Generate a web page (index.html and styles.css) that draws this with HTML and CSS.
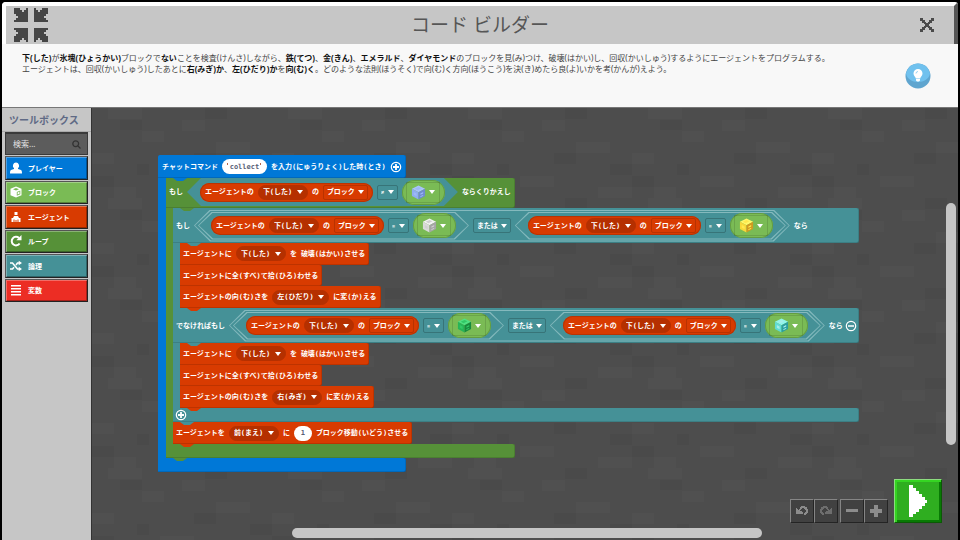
FILE: index.html
```html
<!DOCTYPE html>
<html lang="ja">
<head>
<meta charset="utf-8">
<title>コード ビルダー</title>
<link rel="stylesheet" href="styles.css">
</head>
<body>
<svg class="defs" aria-hidden="true">
  <symbol id="cube" viewBox="0 0 16 16">
    <path class="c-top" d="M8 0.5 15 4 8 7.7 1 4z"/>
    <path class="c-left" d="M1 4 8 7.7V15.5L1 11.8z"/>
    <path class="c-right" d="M15 4 8 7.7V15.5L15 11.8z"/>
    <path class="c-mark" d="M4 4 8 2l3 1.500-4 2zM3 7.500l3 1.500v3l-3-1.500zM10 9l3-1.500v1.500l-3 1.500zM10 12l3-1.500v1l-3 1.500z"/>
  </symbol>
  <symbol id="plus" viewBox="0 0 12 12">
    <circle cx="6" cy="6" r="4.700" fill="none" stroke="#fff" stroke-width="1.200"/>
    <path d="M3 6h6M6 3v6" stroke="#fff" stroke-width="1.800"/>
  </symbol>
  <symbol id="minus" viewBox="0 0 12 12">
    <circle cx="6" cy="6" r="4.700" fill="none" stroke="#fff" stroke-width="1.200"/>
    <path d="M3 6h6" stroke="#fff" stroke-width="1.500"/>
  </symbol>
  <symbol id="arrow" viewBox="0 0 7 7">
    <path d="M0 0h3v1h1v1h1V1h1V0h1v7H0V6h1V5h1V4H1V3H0z"/>
  </symbol>
</svg>

<div class="app">
  <header class="titlebar">
    <button class="icon-button" aria-label="縮小">
      <svg width="34" height="34" viewBox="0 0 17 17" fill="#454545" shape-rendering="crispEdges">
        <use href="#arrow" width="7" height="7"/>
        <use href="#arrow" width="7" height="7" transform="translate(17 0) scale(-1 1)"/>
        <use href="#arrow" width="7" height="7" transform="translate(0 17) scale(1 -1)"/>
        <use href="#arrow" width="7" height="7" transform="translate(17 17) scale(-1 -1)"/>
      </svg>
    </button>
    <h1>コード ビルダー</h1>
    <button class="icon-button close" aria-label="閉じる">
      <svg width="14" height="14" viewBox="0 0 14 14" fill="#4a4a4a">
        <path d="M0 0h3v2h2v2h1v1h2V4h1V2h2V0h3v3h-2v2h-2v1H9v2h1v1h2v2h2v3h-3v-2H9v-2H8V9H6v1H5v2H3v2H0v-3h2V9h2V8h1V6H4V5H2V3H0z"/>
      </svg>
    </button>
  </header>

  <section class="instructions">
    <p><b>下(した)</b>が<b>氷塊(ひょうかい)</b>ブロックで<b>ない</b>ことを検査(けんさ)しながら、<b>鉄(てつ)</b>、<b>金(きん)</b>、<b>エメラルド</b>、<b>ダイヤモンド</b>のブロックを見(み)つけ、破壊(はかい)し、回収(かいしゅう)するようにエージェントをプログラムする。<br>エージェントは、回収(かいしゅう)したあとに<b>右(みぎ)か</b>、<b>左(ひだり)か</b>を<b>向(む)く</b>。どのような法則(ほうそく)で向(む)く方向(ほうこう)を決(き)めたら良(よ)いかを考(かんが)えよう。</p>
    <button class="hint" aria-label="ヒント">
      <svg width="26" height="26" viewBox="0 0 26 26">
        <circle cx="13" cy="13" r="12.500" fill="#5fa5cf"/>
        <path d="M1 10.500a12.200 12.200 0 0 1 24 0C24 16 19 19 13 19S2 16 1 10.500z" fill="#70c1ee"/>
        <path d="M13 6a4.500 4.500 0 0 0-4.500 4.500c0 2.500 2 3 2.300 5h4.400c.3-2 2.300-2.500 2.300-5A4.500 4.500 0 0 0 13 6zM11 16h4v1.500l-1 1h-2l-1-1z" fill="#fff"/>
        <path d="M11 10.500a2 2 0 0 1 2-2" fill="none" stroke="#9bd4f3"/>
      </svg>
    </button>
  </section>

  <main class="editor">
    <aside class="toolbox">
      <h2>ツールボックス</h2>
      <div class="search">
        <input type="search" placeholder="検索..." aria-label="検索">
        <svg width="9" height="9" viewBox="0 0 9 9" fill="none" stroke="#333" stroke-width="1.300"><circle cx="3.700" cy="3.700" r="2.900"/><path d="M6 6l2.500 2.500"/></svg>
      </div>
      <nav class="categories">
        <button class="player"><svg width="12" height="12" viewBox="0 0 12 12" fill="#fff"><path d="M6 .5a3.200 3.300 0 0 1 2 5.800V7l3 1c.8.500 1 1.500 1 3.500H0c0-2 .2-3 1-3.500l3-1v-.7A3.200 3.300 0 0 1 6 .5z"/></svg>プレイヤー</button>
        <button class="blocks"><svg width="12" height="12" viewBox="0 0 12 12" fill="#fff"><path d="M6 .5l5.500 2.300v6.400L6 11.500.5 9.200V2.800z"/><path d="M3 3.300 6 2l3 1.300-3 1.200zM6.800 6v3.800l3.500-1.500V4.500z" fill="#7abb55"/><path d="M7.600 6.400l1.900-.8v2.200l-1.900.8z"/></svg>ブロック</button>
        <button class="agent"><svg width="12" height="12" viewBox="0 0 12 12" fill="#fff"><path d="M4.500 1h3v3h-3zM4 5h4l1 2h1.500v4H8.500V8.500h-1v2.500h-1V9h-1v2h-1V8.500h-1V11H1.500V7H3z"/></svg>エージェント</button>
        <button class="loops"><svg width="12" height="12" viewBox="0 0 12 12"><path d="M9.600 8.500A4.300 4.300 0 1 1 9 3" fill="none" stroke="#fff" stroke-width="2"/><path d="M11.500 0v5.200H6.300z" fill="#fff"/></svg>ループ</button>
        <button class="logic"><svg width="12" height="12" viewBox="0 0 12 12"><path d="M0 3h2.500l5 6H9M0 9h2.500l1.500-1.800M6 5l1.500-2H9" fill="none" stroke="#fff" stroke-width="1.600"/><path d="M8.700.7 12 3 8.700 5.300zM8.700 6.700 12 9l-3.300 2.300z" fill="#fff"/></svg>論理</button>
        <button class="vars"><svg width="12" height="12" viewBox="0 0 12 12" fill="#fff"><path d="M1 1h10v1.500H1zM1 4h10v1.500H1zM1 7h10v1.500H1zM1 10h10v1.500H1z"/></svg>変数</button>
      </nav>
    </aside>

    <section class="workspace" aria-label="ワークスペース">
      <svg class="texture" width="100%" height="100%" aria-hidden="true">
        <defs>
          <pattern id="stone" width="180" height="90" patternUnits="userSpaceOnUse">
            <rect width="180" height="90" fill="#4d4d4d"/>
            <path d="M16 0h34v11H16zM50 23h22v11H50zM90 12h23v11H90zM0 45h22v11H0zM124 34h34v11h-34zM68 68h34v11H68zM146 79h34v11h-34zM22 79h22v11H22z" fill="#505050"/>
            <path d="M28 12h22v10H28zM113 0h22v11h-22zM102 45h22v11h-22zM45 56h12v11H45zM158 56h22v11h-22zM0 68h22v11H0z" fill="#4a4a4a"/>
          </pattern>
        </defs>
        <rect width="100%" height="100%" fill="url(#stone)"/>
      </svg>

      <div class="script">
        <div class="c-block on-chat">
          <div class="head">
            <span>チャットコマンド</span>
            <label class="quoted"><input class="text-field" value="collect" aria-label="チャットコマンド"></label>
            <span>を入力(にゅうりょく)した時(とき)</span>
            <button class="round" aria-label="引数を追加"><svg width="12" height="12"><use href="#plus"/></svg></button>
          </div>
          <div class="body">
            <div class="c-block while">
              <div class="head">
                <span>もし</span>
                <div class="hex">
                  <div class="reporter"><span>エージェントの</span><label class="pick dark"><select aria-label="方向"><option>下(した)</option></select></label><span>の</span><label class="pick"><select aria-label="種類"><option>ブロック</option></select></label></div>
                  <label class="pick op"><select aria-label="比較"><option>≠</option></select></label>
                  <button class="item ice" aria-label="氷塊"><span><svg width="15" height="15"><use href="#cube"/></svg></span></button>
                </div>
                <span>ならくりかえし</span>
              </div>
              <div class="body">
                <div class="c-block if">
                  <div class="head">
                    <span>もし</span>
                    <div class="hex outlined outer">
                      <div class="hex outlined">
                        <div class="reporter"><span>エージェントの</span><label class="pick dark"><select aria-label="方向"><option>下(した)</option></select></label><span>の</span><label class="pick"><select aria-label="種類"><option>ブロック</option></select></label></div>
                        <label class="pick op"><select aria-label="比較"><option>=</option></select></label>
                        <button class="item iron" aria-label="鉄ブロック"><span><svg width="15" height="15"><use href="#cube"/></svg></span></button>
                      </div>
                      <label class="pick or"><select aria-label="論理演算"><option>または</option></select></label>
                      <div class="hex outlined">
                        <div class="reporter"><span>エージェントの</span><label class="pick dark"><select aria-label="方向"><option>下(した)</option></select></label><span>の</span><label class="pick"><select aria-label="種類"><option>ブロック</option></select></label></div>
                        <label class="pick op"><select aria-label="比較"><option>=</option></select></label>
                        <button class="item gold" aria-label="金ブロック"><span><svg width="15" height="15"><use href="#cube"/></svg></span></button>
                      </div>
                    </div>
                    <span>なら</span>
                  </div>
                  <div class="body trio">
                    <div class="statement"><span>エージェントに</span><label class="pick dark"><select aria-label="方向"><option>下(した)</option></select></label><span>を</span><span>破壊(はかい)させる</span></div>
                    <div class="statement"><span>エージェントに全(すべ)て拾(ひろ)わせる</span></div>
                    <div class="statement"><span>エージェントの向(む)きを</span><label class="pick dark"><select aria-label="向き"><option>左(ひだり)</option></select></label><span>に変(か)える</span></div>
                  </div>
                  <div class="head">
                    <span>でなければもし</span>
                    <div class="hex outlined outer">
                      <div class="hex outlined">
                        <div class="reporter"><span>エージェントの</span><label class="pick dark"><select aria-label="方向"><option>下(した)</option></select></label><span>の</span><label class="pick"><select aria-label="種類"><option>ブロック</option></select></label></div>
                        <label class="pick op"><select aria-label="比較"><option>=</option></select></label>
                        <button class="item emerald" aria-label="エメラルドブロック"><span><svg width="15" height="15"><use href="#cube"/></svg></span></button>
                      </div>
                      <label class="pick or"><select aria-label="論理演算"><option>または</option></select></label>
                      <div class="hex outlined">
                        <div class="reporter"><span>エージェントの</span><label class="pick dark"><select aria-label="方向"><option>下(した)</option></select></label><span>の</span><label class="pick"><select aria-label="種類"><option>ブロック</option></select></label></div>
                        <label class="pick op"><select aria-label="比較"><option>=</option></select></label>
                        <button class="item diamond" aria-label="ダイヤモンドブロック"><span><svg width="15" height="15"><use href="#cube"/></svg></span></button>
                      </div>
                    </div>
                    <span>なら</span>
                    <button class="round" aria-label="条件を削除"><svg width="12" height="12"><use href="#minus"/></svg></button>
                  </div>
                  <div class="body trio">
                    <div class="statement"><span>エージェントに</span><label class="pick dark"><select aria-label="方向"><option>下(した)</option></select></label><span>を</span><span>破壊(はかい)させる</span></div>
                    <div class="statement"><span>エージェントに全(すべ)て拾(ひろ)わせる</span></div>
                    <div class="statement"><span>エージェントの向(む)きを</span><label class="pick dark"><select aria-label="向き"><option>右(みぎ)</option></select></label><span>に変(か)える</span></div>
                  </div>
                  <div class="foot"><button class="round" aria-label="条件を追加"><svg width="12" height="12"><use href="#plus"/></svg></button></div>
                </div>
                <div class="statement"><span>エージェントを</span><label class="pick dark"><select aria-label="方向"><option>前(まえ)</option></select></label><span>に</span><input class="text-field number" value="1" aria-label="ブロック数"><span>ブロック移動(いどう)させる</span></div>
              </div>
              <div class="foot"></div>
            </div>
          </div>
          <div class="foot"></div>
        </div>
      </div>

      <div class="scroll-v"></div>
      <div class="scroll-h"></div>

      <div class="controls">
        <div class="pair">
          <button aria-label="元に戻す"><svg width="12" height="10" viewBox="0 0 12 10" shape-rendering="crispEdges" fill="#8c8c8c"><path d="M5 0h4v1h2v2h1v4h-1v1h-1v1H8V7h1V6h1V4H9V3H8V2H6v1H5v1H4v1h2v1h1v2H0V2h1v1h1v1h1V3h1V1h1z"/></svg></button>
          <button aria-label="やり直す"><svg class="flip" width="12" height="10" viewBox="0 0 12 10" shape-rendering="crispEdges" fill="#6e6e6e"><path d="M5 0h4v1h2v2h1v4h-1v1h-1v1H8V7h1V6h1V4H9V3H8V2H6v1H5v1H4v1h2v1h1v2H0V2h1v1h1v1h1V3h1V1h1z"/></svg></button>
        </div>
        <div class="pair">
          <button aria-label="縮小表示"><svg width="12" height="12" fill="#8c8c8c"><path d="M0 4h12v3H0z"/></svg></button>
          <button aria-label="拡大表示"><svg width="12" height="12" fill="#8c8c8c"><path d="M4 0h4v4h4v4H8v4H4V8H0V4h4z"/></svg></button>
        </div>
        <button class="play" aria-label="実行"><svg width="18" height="32" viewBox="0 0 18 32" fill="#fff" shape-rendering="crispEdges"><path d="M0 0h4v3h3v3h3v3h3v3h3v3h2v3h-2v3h-3v3h-3v3H7v2H4v3H0z"/></svg></button>
      </div>
    </section>
  </main>
</div>
</body>
</html>
```
FILE: styles.css
```css
* { box-sizing: border-box; }

body {
  margin: 0;
  background: #000;
  font-family: "Noto Sans", "Noto Sans CJK JP", sans-serif;
  overflow: hidden;
}

button, input, select { font: inherit; color: inherit; margin: 0; }
button { border: 0; padding: 0; background: none; display: flex; align-items: center; }
svg { display: block; flex: none; }
.defs { position: absolute; width: 0; height: 0; }

.app {
  display: flex;
  flex-direction: column;
  height: 100vh;
  padding: 2px 2px 0;
}

/* Title bar */
.titlebar {
  display: grid;
  grid-template-columns: 1fr auto 1fr;
  align-items: center;
  height: 42px;
  padding: 0 8px;
  background: #c6c6c6;
  border-top: 4px solid #fff;
  border-left: 4px solid #fff;
  border-right: 4px solid #555;
  border-top-left-radius: 4px;
  border-top-right-radius: 3px;
}
.titlebar h1 { margin: 0; font-size: 19px; line-height: 28px; font-weight: 400; color: #565656; }
.close { justify-self: end; padding-right: 12px; }

/* Instructions */
.instructions {
  display: flex;
  justify-content: space-between;
  align-items: flex-start;
  height: 64px;
  padding: 8px 27px 0 20px;
  background: #f8f8f8;
  border-bottom: 1px solid #777;
}
.instructions p { margin: 0; font-size: 8px; line-height: 11px; color: #444; white-space: nowrap; }
.instructions b { color: #111; }
.hint { margin-top: 11px; }

/* Toolbox */
.editor { display: flex; flex: 1; min-height: 0; }
.toolbox {
  flex: none;
  width: 90px;
  background: #c6c6c6;
  border-right: 1px solid #333;
}
.toolbox h2 {
  margin: 0;
  padding-left: 7px;
  height: 24px;
  font-size: 10px;
  line-height: 24px;
  font-weight: 700;
  color: #5f6a85;
  border-bottom: 1px solid #aaa;
}
.search {
  display: flex;
  align-items: center;
  height: 23px;
  margin: 0 3px;
  padding: 0 6px 0 7px;
  background: #5c5c5c;
  border: 1px solid #3a3a3a;
  border-top-width: 2px;
}
.search input {
  flex: 1;
  min-width: 0;
  padding: 0;
  border: 0;
  outline: 0;
  background: none;
  font-size: 8px;
  line-height: 12px;
}
.search input::placeholder { color: #e4e4e4; opacity: 1; }
.categories {
  display: flex;
  flex-direction: column;
  height: 147px;
  margin: 1px 3px 0;
}
.categories button {
  flex: 1;
  gap: 6px;
  margin-bottom: 1px;
  padding-left: 4px;
  color: #fff;
  font: bold 7px "DejaVu Sans Mono", "Noto Sans CJK JP", monospace;
  border: 1px solid #222;
  border-top: 1px solid #555;
  border-left: 1px solid #555;
  box-shadow: inset 1px 1px rgba(255, 255, 255, .3), inset -1px -1px rgba(0, 0, 0, .3);
}
.player { background: #0078d7; }
.blocks { background: #7abb55; }
.agent { background: #d83b01; }
.loops { background: #569138; }
.logic { background: #459197; }
.vars { background: #ec2d24; }

/* Workspace */
.workspace { position: relative; flex: 1; min-width: 0; overflow: hidden; }
.texture { position: absolute; inset: 0; }
.script {
  position: absolute;
  left: 66px;
  top: 47px;
  color: #fff;
  font: bold 7px/10px "DejaVu Sans Mono", "Noto Sans CJK JP", monospace;
  white-space: nowrap;
}

.c-block {
  --arm: 7px;
  display: grid;
  justify-items: stretch;
  width: max-content;
}
.on-chat { --fill: #0078d7; --arm: 8px; }
.while { --fill: #569138; }
.if { --fill: #459197; }

.head, .foot, .statement {
  position: relative;
  display: flex;
  align-items: center;
  gap: 4px;
  padding: 0 4px;
  background: var(--fill);
  box-shadow: inset 0 -1px rgba(0, 0, 0, .12), inset -1px 0 rgba(0, 0, 0, .12);
  border-radius: 0 2px 2px 0;
}
.head, .statement { padding-left: 3px; }
.on-chat > .head { height: 23px; padding-left: 4px; border-radius: 2px 2px 2px 0; }
.while > .head { height: 30px; padding-bottom: 2px; }
.if > .head { height: 35px; }
.foot { height: 14px; }
.if .round { margin: 0 -2px; }

.head::after, .statement::after, .while > .foot::after, .if > .foot::after {
  content: "";
  position: absolute;
  left: 7px;
  bottom: -3px;
  width: 14px;
  height: 3px;
  background: var(--fill);
  clip-path: polygon(0 0, 100% 0, 10px 100%, 4px 100%);
  z-index: 1;
}
.head::after { left: calc(var(--arm) + 7px); }

.body {
  width: 0;
  border-left: var(--arm) solid var(--fill);
}
.trio { display: flex; flex-direction: column; height: 65px; }
.trio .statement { flex: 1; }
.statement {
  --fill: #d83b01;
  width: max-content;
  height: 22px;
}

.hex {
  --tip: 14px;
  display: flex;
  align-items: center;
  gap: 4px;
  height: 28px;
  padding: 0 13px;
  background: #459197;
  clip-path: polygon(0 50%, var(--tip) 0, calc(100% - var(--tip)) 0, 100% 50%, calc(100% - var(--tip)) 100%, var(--tip) 100%);
}
.hex.outlined { position: relative; background: #84b9bd; }
.hex.outlined::before {
  content: "";
  position: absolute;
  inset: 1px;
  background: #459197;
  clip-path: polygon(0 50%, var(--tip) 0, calc(100% - var(--tip)) 0, 100% 50%, calc(100% - var(--tip)) 100%, var(--tip) 100%);
}
.hex.outlined > * { position: relative; }
.hex.outer { --tip: 16px; height: 32px; padding: 0 4px; }
.hex.outer > .hex { --tip: 14px; }

.reporter {
  display: flex;
  align-items: center;
  gap: 4px;
  height: 19px;
  padding: 0 5px;
  border-radius: 10px;
  background: #d83b01;
  box-shadow: inset 0 0 0 1px #b83404;
}

.pick { position: relative; display: flex; align-items: center; }
.pick::after, .item > span::after {
  content: "";
  position: absolute;
  right: 4px;
  top: 50%;
  margin-top: -2px;
  border: 3px solid transparent;
  border-top: 4px solid #fff;
  border-bottom: 0;
  pointer-events: none;
}
.pick select {
  appearance: none;
  height: 15px;
  padding: 0 12px 0 3px;
  border: 1px solid rgba(0, 0, 0, .14);
  border-radius: 2px;
  background: none;
  outline: 0;
}
.pick.dark select { padding: 0 14px 0 4px; border: 1px solid #b53000; border-radius: 8px; background: #b53000; }
.pick.dark::after { right: 5px; }
.pick.op select { width: 21px; padding: 0 0 0 3px; font-size: 5px; border-color: rgba(0, 0, 0, .2); }
.pick.or select { border-color: rgba(0, 0, 0, .2); }

.item {
  flex: none;
  justify-content: center;
  width: 43px;
  height: 25px;
  border-radius: 13px;
  background: #7abb55;
  box-shadow: inset 0 0 0 1px #639c42;
}
.item > span {
  position: relative;
  width: 34px;
  height: 21px;
  padding: 2px 4px;
  border: 1px solid rgba(0, 0, 0, .12);
}
.item > span::after { right: 4px; }
.c-top { fill: var(--top); }
.c-left { fill: var(--left); }
.c-right { fill: var(--right); }
.c-mark { fill: var(--mark); }
.ice { --top: #a9c4fb; --left: #8fadf0; --right: #6f8bd0; --mark: #9db9f6; }
.iron { --top: #f2f2f2; --left: #dadada; --right: #a5a5a5; --mark: #d0d0d0; }
.gold { --top: #fff86a; --left: #f7d83a; --right: #d09a20; --mark: #ffe94e; }
.emerald { --top: #4fe083; --left: #27b457; --right: #168a3e; --mark: #32c766; }
.diamond { --top: #8ff5ea; --left: #5fdcd6; --right: #2b9f9f; --mark: #a5eee8; }

.text-field {
  display: block;
  width: 45px;
  height: 15px;
  padding: 0;
  border: 0;
  border-radius: 8px;
  background: #fff;
  color: #575e75;
  text-align: center;
}
.number { width: 18px; }
.quoted { position: relative; }
.quoted::before, .quoted::after {
  content: "";
  position: absolute;
  top: 4px;
  width: 1px;
  height: 2px;
  background: #b5654a;
}
.quoted::before { left: 5px; }
.quoted::after { right: 6px; }

/* Scrollbars and floating controls */
.scroll-v, .scroll-h { position: absolute; border-radius: 5px; background: #c6c6c6; }
.scroll-v { right: 2px; top: 22%; height: 56%; width: 10px; }
.scroll-h { bottom: 2px; left: 200px; right: 196px; height: 10px; }

.controls {
  position: absolute;
  right: 16px;
  bottom: 17px;
  display: flex;
  align-items: flex-end;
}
.pair { display: flex; margin-right: 2px; }
.pair + .pair { margin-right: 6px; }
.controls button { justify-content: center; }
.pair button {
  width: 24px;
  height: 24px;
  background: #414141;
  border: 1px solid #242424;
  border-top-color: #858585;
  border-left-color: #858585;
}
.flip { transform: scaleX(-1); }
.controls .play {
  width: 48px;
  height: 44px;
  background: #2fae20;
  border: 1px solid #8ddc80;
  border-right-color: #0b5a05;
  border-bottom-color: #0b5a05;
  box-shadow: inset 2px 2px #35d522, inset -2px -2px #087a04;
}
```
